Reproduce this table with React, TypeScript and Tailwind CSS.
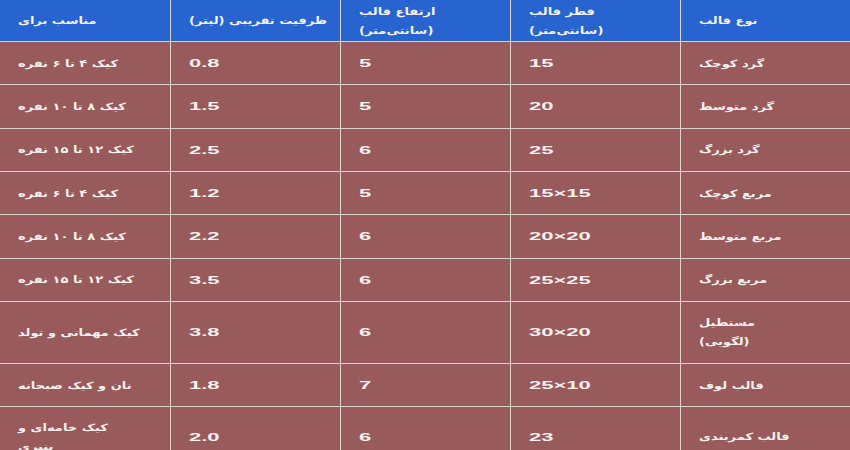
import React from "react";

type Row = {
  type: string[];
  dia: string;
  height: string;
  cap: string;
  use: string[];
  tall?: string;
};

const rows: Row[] = [
  { type: ["گرد کوچک"], dia: "15", height: "5", cap: "0.8", use: ["کیک ۴ تا ۶ نفره"] },
  { type: ["گرد متوسط"], dia: "20", height: "5", cap: "1.5", use: ["کیک ۸ تا ۱۰ نفره"] },
  { type: ["گرد بزرگ"], dia: "25", height: "6", cap: "2.5", use: ["کیک ۱۲ تا ۱۵ نفره"] },
  { type: ["مربع کوچک"], dia: "15×15", height: "5", cap: "1.2", use: ["کیک ۴ تا ۶ نفره"] },
  { type: ["مربع متوسط"], dia: "20×20", height: "6", cap: "2.2", use: ["کیک ۸ تا ۱۰ نفره"] },
  { type: ["مربع بزرگ"], dia: "25×25", height: "6", cap: "3.5", use: ["کیک ۱۲ تا ۱۵ نفره"] },
  { type: ["مستطیل", "(لگویی)"], dia: "30×20", height: "6", cap: "3.8", use: ["کیک مهمانی و تولد"], tall: "h-[62px]" },
  { type: ["قالب لوف"], dia: "25×10", height: "7", cap: "1.8", use: ["نان و کیک صبحانه"] },
  { type: ["قالب کمربندی"], dia: "23", height: "6", cap: "2.0", use: ["کیک خامه‌ای و", "پنیری"], tall: "h-[60px]" },
];

const faFont = "font-['DejaVu_Sans',sans-serif]";

function Fa({ lines }: { lines: string[] }) {
  return (
    <span
      dir="rtl"
      className={`inline-block origin-left scale-x-[1.3] whitespace-nowrap text-left text-[10px] font-bold leading-[19px] text-[#f7f1f1] ${faFont}`}
    >
      {lines.map((l, i) => (
        <span key={i} className="block">
          {l}
        </span>
      ))}
    </span>
  );
}

function Num({ value }: { value: string }) {
  return (
    <span
      dir="ltr"
      className="inline-block origin-left scale-x-200 whitespace-nowrap text-[11px] font-bold text-[#f7f1f1] font-['Liberation_Sans',Arial,sans-serif]"
    >
      {value}
    </span>
  );
}

function Cell({ children, last }: { children: React.ReactNode; last?: boolean }) {
  return (
    <div className={`flex items-center justify-end pl-[18px] ${last ? "" : "border-l border-[#ded3d3]"}`}>
      {children}
    </div>
  );
}

export default function App() {
  return (
    <div className="h-[450px] w-[850px] overflow-hidden bg-white">
      {/* header */}
      <div dir="rtl" className="grid h-[42px] grid-cols-5 border-b border-[#ded3d3] bg-[#2864cf]">
        <Cell><Fa lines={["نوع قالب"]} /></Cell>
        <Cell><Fa lines={["قطر قالب", "(سانتی‌متر)"]} /></Cell>
        <Cell><Fa lines={["ارتفاع قالب", "(سانتی‌متر)"]} /></Cell>
        <Cell><Fa lines={["ظرفیت تقریبی (لیتر)"]} /></Cell>
        <Cell last><Fa lines={["مناسب برای"]} /></Cell>
      </div>

      {rows.map((r, i) => (
        <div
          key={i}
          dir="rtl"
          className={`grid grid-cols-5 border-b border-[#ded3d3] bg-[#985a5b] ${r.tall ?? "h-[43.33px]"}`}
        >
          <Cell><Fa lines={r.type} /></Cell>
          <Cell><Num value={r.dia} /></Cell>
          <Cell><Num value={r.height} /></Cell>
          <Cell><Num value={r.cap} /></Cell>
          <Cell last><Fa lines={r.use} /></Cell>
        </div>
      ))}
    </div>
  );
}
